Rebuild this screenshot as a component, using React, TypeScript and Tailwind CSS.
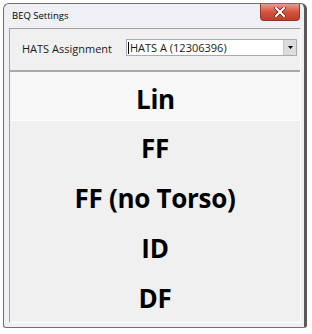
import React from 'react';

const items = ['Lin', 'FF', 'FF (no Torso)', 'ID', 'DF'];

const App: React.FC = () => {
  return (
    <div className="w-[312px] h-[334px] bg-white pt-[3px] pl-[3px] font-['Open_Sans',sans-serif]">
      <div className="w-[304px] h-[325px] flex flex-col border border-[#707070] border-r-[3px] border-r-[#5a5a5a] rounded-tl-[6px] rounded-tr-[6px] rounded-b-[3px] bg-[#eef0f3]">
        {/* title bar */}
        <div className="h-[24px] flex items-start justify-between shrink-0">
          <span className="pl-[8px] pt-[6px] text-[9.5px] leading-[12px] text-black">BEQ Settings</span>
          <button className="mr-[4px] w-[40px] h-[17px] rounded-b-[4px] border border-t-0 border-[#8a3a30] bg-gradient-to-b from-[#e99a8c] via-[#d4533f] to-[#c13a28] flex items-center justify-center">
            <svg width="12" height="10" viewBox="0 0 12 10">
              <path d="M2 1 L10 9 M10 1 L2 9" stroke="#5a1e18" strokeWidth="3.4" strokeLinecap="square" />
              <path d="M2 1 L10 9 M10 1 L2 9" stroke="#ffffff" strokeWidth="2" strokeLinecap="square" />
            </svg>
          </button>
        </div>

        {/* client */}
        <div className="ml-[5px] mr-[3px] h-[295px] flex flex-col bg-[#f0f0f0] border-t border-l border-[#a0a0a0] border-b border-r border-b-[#ffffff] border-r-[#ffffff]">
          <div className="h-[41px] shrink-0 flex items-start pt-[10px] pl-[12px] pr-[3px]">
            <span className="w-[104px] pt-[3px] text-[11px] leading-[14px] text-[#1a1a1a]">HATS Assignment</span>
            <div className="flex-1 h-[17px] flex items-center bg-white border border-[#a5acb5]">
              <span className="w-px h-[12px] bg-black ml-[1px]" />
              <span className="flex-1 pl-px text-[11px] leading-[14px] text-[#1a1a1a]">HATS A (12306396)</span>
              <div className="w-[13px] h-[15px] bg-[#dcdcdc] border-l border-[#c8c8c8] flex items-center justify-center">
                <svg width="5" height="3" viewBox="0 0 5 3"><path d="M0 0 H5 L2.5 3 Z" fill="#000" /></svg>
              </div>
            </div>
          </div>
          <div className="flex-1 flex flex-col border-t-2 border-[#a8a8a8] mx-0">
            {items.map((t, i) => (
              <div
                key={t}
                className={
                  i === 0
                    ? 'h-[49px] flex items-center justify-center pt-[5px] ml-px border-b border-white bg-[repeating-conic-gradient(#f3f4f4_0_25%,#fbfbfb_0_50%)] bg-[length:2px_2px]'
                    : 'h-[50px] flex items-center justify-center pt-[4px]'
                }
              >
                <span className="text-[26px] leading-none font-bold text-black tracking-[-0.3px]">{t}</span>
              </div>
            ))}
          </div>
        </div>
      </div>
    </div>
  );
};

export default App;
